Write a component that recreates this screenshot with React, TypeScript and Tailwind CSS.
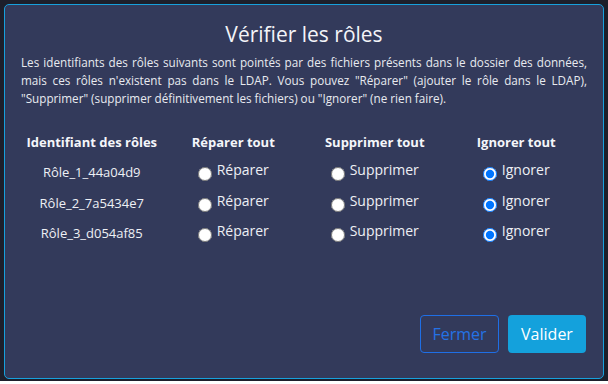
import React from "react";

const roles = ["Rôle_1_44a04d9", "Rôle_2_7a5434e7", "Rôle_3_d054af85"];

function Radio({ label, checked, name }: { label: string; checked?: boolean; name: string }) {
  return (
    <label className="inline-flex items-center text-[14px] leading-none text-[#eef0f5]">
      <input type="radio" name={name} defaultChecked={checked} className="relative top-[1.5px] m-0 mr-[5px] h-[14px] w-[14px]" />
      <span className="relative -top-[2.5px]">{label}</span>
    </label>
  );
}

export default function App() {
  return (
    <div className="h-[384px] w-[608px] bg-white" style={{ fontFamily: '"Open Sans", sans-serif' }}>
      <div className="h-[381px] bg-[#1d1f2b] pl-[4px] pr-[4px] pt-[4px]">
        <div className="flex h-[375px] flex-col rounded-[5px] border border-[#17a0dc] bg-[#333a5b] px-[16px] pt-[14px] pb-[25px]">
          <h1 className="h-[30px] text-center text-[21px] font-normal leading-[30px] text-[#f3f4f8]">Vérifier les rôles</h1>
          <p className="mt-[4px] text-justify text-[11.7px] leading-[18px] text-[#e8eaf0]">
            Les identifiants des rôles suivants sont pointés par des fichiers présents dans le dossier des données,
            mais ces rôles n'existent pas dans le LDAP. Vous pouvez "Réparer" (ajouter le rôle dans le LDAP),
            "Supprimer" (supprimer définitivement les fichiers) ou "Ignorer" (ne rien faire).
          </p>
          <div className="mt-[20px] grid grid-cols-4 auto-rows-[30.5px] items-center text-center">
            <div className="text-[13px] font-bold text-[#f5f6fa]">Identifiant des rôles</div>
            <div className="text-[13px] font-bold text-[#f5f6fa]">Réparer tout</div>
            <div className="text-[13px] font-bold text-[#f5f6fa]">Supprimer tout</div>
            <div className="text-[13px] font-bold text-[#f5f6fa]">Ignorer tout</div>
            {roles.map((r, i) => (
              <React.Fragment key={r}>
                <div className="text-[13px] text-[#eef0f5]">{r}</div>
                <div className="flex justify-center"><Radio name={"r" + i} label="Réparer" /></div>
                <div className="flex justify-center"><Radio name={"r" + i} label="Supprimer" /></div>
                <div className="flex justify-center"><Radio name={"r" + i} label="Ignorer" checked /></div>
              </React.Fragment>
            ))}
          </div>
          <div className="flex-1" />
          <div className="flex justify-end gap-[9px] pr-[1px]">
            <button className="h-[38px] w-[79px] rounded-[4px] border border-[#1f6fe6] text-[16px] text-[#2472e6]">Fermer</button>
            <button className="h-[38px] w-[78px] rounded-[4px] bg-[#14a1dc] text-[16px] text-white">Valider</button>
          </div>
        </div>
      </div>
    </div>
  );
}
